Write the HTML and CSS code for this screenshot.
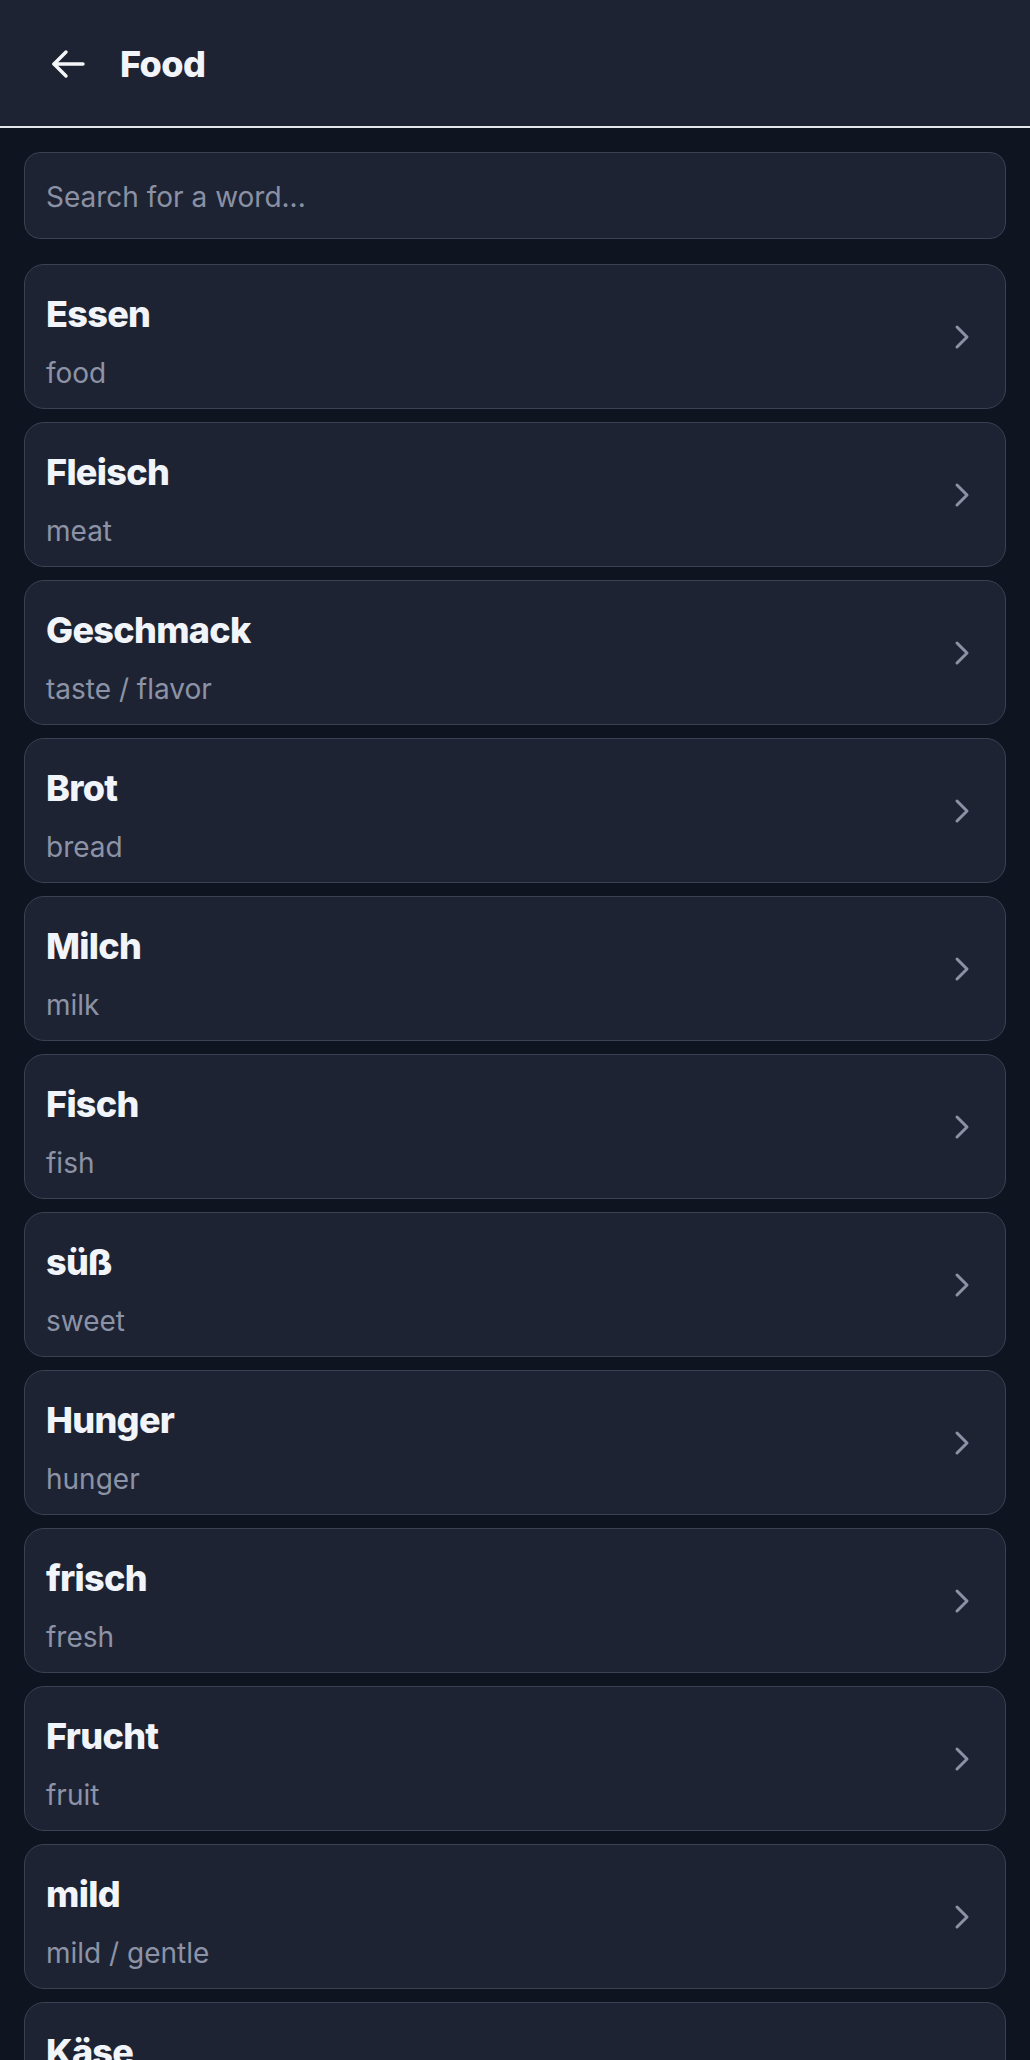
FILE: index.html
```html
<!DOCTYPE html>
<html lang="en">
<head>
<meta charset="utf-8">
<title>Food</title>
<link rel="stylesheet" href="styles.css">
</head>
<body>
<header class="topbar">
  <button class="back" aria-label="Back">
    <svg width="34" height="30" viewBox="0 0 34 30" fill="none" stroke="currentColor" stroke-width="3.4" stroke-linecap="round" stroke-linejoin="round"><path d="M32 15H3"/><path d="M15 3L3 15l12 12"/></svg>
  </button>
  <h1 class="title">Food</h1>
</header>
<main class="content">
  <div class="search"><span class="placeholder">Search for a word...</span></div>
  <ul class="list">
    <li class="card"><div class="text"><div class="word">Essen</div><div class="meaning">food</div></div><svg class="chev" width="18" height="26" viewBox="0 0 18 26" fill="none" stroke="currentColor" stroke-width="3" stroke-linecap="round" stroke-linejoin="round"><path d="M3 3l10 10L3 23"/></svg></li>
    <li class="card"><div class="text"><div class="word">Fleisch</div><div class="meaning">meat</div></div><svg class="chev" width="18" height="26" viewBox="0 0 18 26" fill="none" stroke="currentColor" stroke-width="3" stroke-linecap="round" stroke-linejoin="round"><path d="M3 3l10 10L3 23"/></svg></li>
    <li class="card"><div class="text"><div class="word">Geschmack</div><div class="meaning">taste / flavor</div></div><svg class="chev" width="18" height="26" viewBox="0 0 18 26" fill="none" stroke="currentColor" stroke-width="3" stroke-linecap="round" stroke-linejoin="round"><path d="M3 3l10 10L3 23"/></svg></li>
    <li class="card"><div class="text"><div class="word">Brot</div><div class="meaning">bread</div></div><svg class="chev" width="18" height="26" viewBox="0 0 18 26" fill="none" stroke="currentColor" stroke-width="3" stroke-linecap="round" stroke-linejoin="round"><path d="M3 3l10 10L3 23"/></svg></li>
    <li class="card"><div class="text"><div class="word">Milch</div><div class="meaning">milk</div></div><svg class="chev" width="18" height="26" viewBox="0 0 18 26" fill="none" stroke="currentColor" stroke-width="3" stroke-linecap="round" stroke-linejoin="round"><path d="M3 3l10 10L3 23"/></svg></li>
    <li class="card"><div class="text"><div class="word">Fisch</div><div class="meaning">fish</div></div><svg class="chev" width="18" height="26" viewBox="0 0 18 26" fill="none" stroke="currentColor" stroke-width="3" stroke-linecap="round" stroke-linejoin="round"><path d="M3 3l10 10L3 23"/></svg></li>
    <li class="card"><div class="text"><div class="word">süß</div><div class="meaning">sweet</div></div><svg class="chev" width="18" height="26" viewBox="0 0 18 26" fill="none" stroke="currentColor" stroke-width="3" stroke-linecap="round" stroke-linejoin="round"><path d="M3 3l10 10L3 23"/></svg></li>
    <li class="card"><div class="text"><div class="word">Hunger</div><div class="meaning">hunger</div></div><svg class="chev" width="18" height="26" viewBox="0 0 18 26" fill="none" stroke="currentColor" stroke-width="3" stroke-linecap="round" stroke-linejoin="round"><path d="M3 3l10 10L3 23"/></svg></li>
    <li class="card"><div class="text"><div class="word">frisch</div><div class="meaning">fresh</div></div><svg class="chev" width="18" height="26" viewBox="0 0 18 26" fill="none" stroke="currentColor" stroke-width="3" stroke-linecap="round" stroke-linejoin="round"><path d="M3 3l10 10L3 23"/></svg></li>
    <li class="card"><div class="text"><div class="word">Frucht</div><div class="meaning">fruit</div></div><svg class="chev" width="18" height="26" viewBox="0 0 18 26" fill="none" stroke="currentColor" stroke-width="3" stroke-linecap="round" stroke-linejoin="round"><path d="M3 3l10 10L3 23"/></svg></li>
    <li class="card"><div class="text"><div class="word">mild</div><div class="meaning">mild / gentle</div></div><svg class="chev" width="18" height="26" viewBox="0 0 18 26" fill="none" stroke="currentColor" stroke-width="3" stroke-linecap="round" stroke-linejoin="round"><path d="M3 3l10 10L3 23"/></svg></li>
    <li class="card"><div class="text"><div class="word">Käse</div><div class="meaning">cheese</div></div><svg class="chev" width="18" height="26" viewBox="0 0 18 26" fill="none" stroke="currentColor" stroke-width="3" stroke-linecap="round" stroke-linejoin="round"><path d="M3 3l10 10L3 23"/></svg></li>
  </ul>
</main>
</body>
</html>
```
FILE: styles.css
```css
* { box-sizing: border-box; }
html, body { margin: 0; padding: 0; }
body {
  background: #0f1421;
  font-family: Inter, "Noto Sans", "Liberation Sans", sans-serif;
  color: #f1f4f9;
}
.topbar {
  height: 128px;
  background: #1e2333;
  border-bottom: 2px solid #e3e5ea;
  display: flex;
  align-items: center;
  padding: 2px 0 0 51px;
  gap: 35px;
}
.back {
  background: none;
  border: 0;
  padding: 0;
  color: #f4f6fa;
  display: flex;
  align-items: center;
}
.title {
  margin: 0;
  font-size: 36px;
  font-weight: 800;
  line-height: 44px;
  letter-spacing: -0.6px;
  color: #f1f4f9;
}
.content {
  padding: 24px 24px 0;
}
.search {
  height: 87px;
  border: 1.5px solid #3b4153;
  border-radius: 16px;
  background: #1e2333;
  display: flex;
  align-items: center;
  padding: 2px 0 0 21px;
}
.placeholder {
  font-size: 28px;
  color: #8a91a4;
}
.list {
  list-style: none;
  margin: 25px 0 0;
  padding: 0;
  display: flex;
  flex-direction: column;
  gap: 13px;
}
.card {
  height: 145px;
  border: 1.5px solid #3b4153;
  border-radius: 20px;
  background: #1e2333;
  display: flex;
  align-items: center;
  justify-content: space-between;
  padding: 0 33px 0 21px;
}
.text {
  align-self: stretch;
  display: flex;
  flex-direction: column;
  gap: 19px;
  padding-top: 26.5px;
}
.word {
  font-size: 36px;
  font-weight: 800;
  line-height: 44px;
  letter-spacing: -0.7px;
  color: #f1f4f9;
}
.meaning {
  font-size: 28px;
  line-height: 36px;
  color: #8c93a6;
}
.chev {
  color: #8b92a6;
}
```
